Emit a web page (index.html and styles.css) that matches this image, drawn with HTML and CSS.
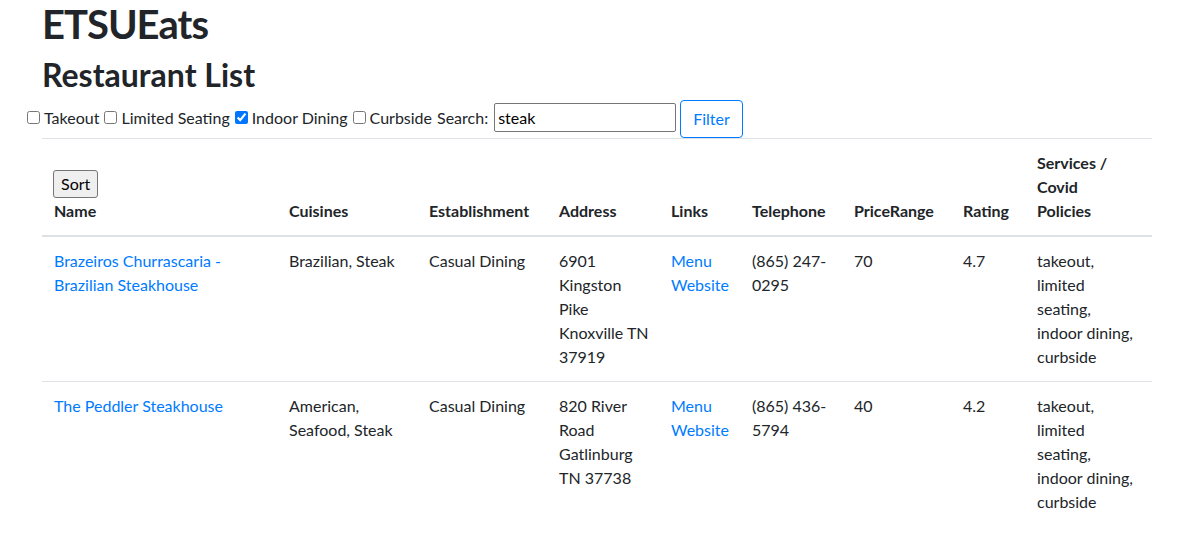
FILE: index.html
```html
<!DOCTYPE html>
<html lang="en">
<head>
<meta charset="utf-8">
<title>ETSUEats</title>
<link rel="stylesheet" href="styles.css">
</head>
<body>
<div class="container">
  <h1 class="title">ETSUEats</h1>
  <h2 class="subtitle">Restaurant List</h2>
</div>
<form class="filters">
  <label class="opt"><input type="checkbox" class="cb">Takeout</label>
  <label class="opt"><input type="checkbox" class="cb">Limited Seating</label>
  <label class="opt"><input type="checkbox" class="cb" checked>Indoor Dining</label>
  <label class="opt"><input type="checkbox" class="cb">Curbside</label>
  <label class="opt opt-search">Search:<input type="text" class="search" value="steak"></label>
  <button type="button" class="btn-filter">Filter</button>
</form>
<div class="container">
  <table class="table">
    <colgroup>
      <col style="width:235px"><col style="width:140px"><col style="width:130px"><col style="width:112px"><col style="width:81px"><col style="width:102px"><col style="width:109px"><col style="width:74px"><col style="width:127px">
    </colgroup>
    <thead>
      <tr>
        <th><button type="button" class="btn-sort">Sort</button><br>Name</th>
        <th>Cuisines</th>
        <th>Establishment</th>
        <th class="col-addr">Address</th>
        <th>Links</th>
        <th>Telephone</th>
        <th>PriceRange</th>
        <th>Rating</th>
        <th class="col-services">Services / Covid Policies</th>
      </tr>
    </thead>
    <tbody>
      <tr>
        <td><a href="#">Brazeiros Churrascaria - Brazilian Steakhouse</a></td>
        <td>Brazilian, Steak</td>
        <td>Casual Dining</td>
        <td class="col-addr">6901 Kingston Pike Knoxville TN 37919</td>
        <td><a href="#">Menu</a><br><a href="#">Website</a></td>
        <td>(865) 247-0295</td>
        <td>70</td>
        <td>4.7</td>
        <td>takeout, limited seating, indoor dining, curbside</td>
      </tr>
      <tr>
        <td><a href="#">The Peddler Steakhouse</a></td>
        <td>American, Seafood, Steak</td>
        <td>Casual Dining</td>
        <td class="col-addr">820 River Road Gatlinburg TN 37738</td>
        <td><a href="#">Menu</a><br><a href="#">Website</a></td>
        <td>(865) 436-5794</td>
        <td>40</td>
        <td>4.2</td>
        <td>takeout, limited seating, indoor dining, curbside</td>
      </tr>
    </tbody>
  </table>
</div>
</body>
</html>
```
FILE: styles.css
```css
* { box-sizing: border-box; }
body {
  margin: 0;
  font-family: Lato, "Open Sans", "Liberation Sans", sans-serif;
  font-size: 16px;
  line-height: 1.5;
  color: #212529;
  background: #fff;
}
.container {
  padding-left: 42px;
  width: 1152px;
}
.title {
  margin: 0 0 8px;
  font-size: 40px;
  font-weight: 700;
  line-height: 48px;
  letter-spacing: -1px;
}
.subtitle {
  margin: 0 0 6px;
  font-size: 32px;
  font-weight: 700;
  line-height: 38px;
}
.filters {
  margin: 0 0 0 23px;
  height: 38px;
  display: flex;
  align-items: center;
  white-space: nowrap;
}
.opt {
  display: inline-flex;
  align-items: center;
  margin-right: 1px;
  margin-bottom: 3px;
}
.opt-search { margin-left: 4px; }
.cb {
  width: 13px;
  height: 13px;
  margin: 3px 4px 3px 4px;
  accent-color: #0075ff;
}
.search {
  width: 182px;
  height: 29px;
  margin-left: 6px;
  font: inherit;
  font-size: 16px;
  line-height: 20px;
  padding: 1px 3px;
  border: 1px solid #767676;
  border-radius: 2px;
  color: #000;
}
.btn-filter {
  height: 38px;
  padding: 6px 12px;
  margin-left: 3px;
  font: inherit;
  color: #007bff;
  background: transparent;
  border: 1px solid #007bff;
  border-radius: 4px;
}
.table {
  width: 1110px;
  table-layout: fixed;
  border-collapse: collapse;
  margin-bottom: 16px;
}
.table th, .table td {
  padding: 12px;
  vertical-align: top;
  border-top: 1px solid #dee2e6;
  text-align: left;
}
.table thead th {
  vertical-align: bottom;
  border-bottom: 2px solid #dee2e6;
  font-weight: 700;
}
.table .col-addr { padding-right: 8px; }
.table .col-services { padding-right: 40px; }
.table a { color: #007bff; text-decoration: none; }
.btn-sort {
  font: inherit;
  font-weight: 400;
  line-height: 24px;
  padding: 1px 7px;
  color: #000;
  background: #efefef;
  border: 1px solid #767676;
  border-radius: 3px;
  margin-left: -1px;
  margin-bottom: 1px;
}
```
